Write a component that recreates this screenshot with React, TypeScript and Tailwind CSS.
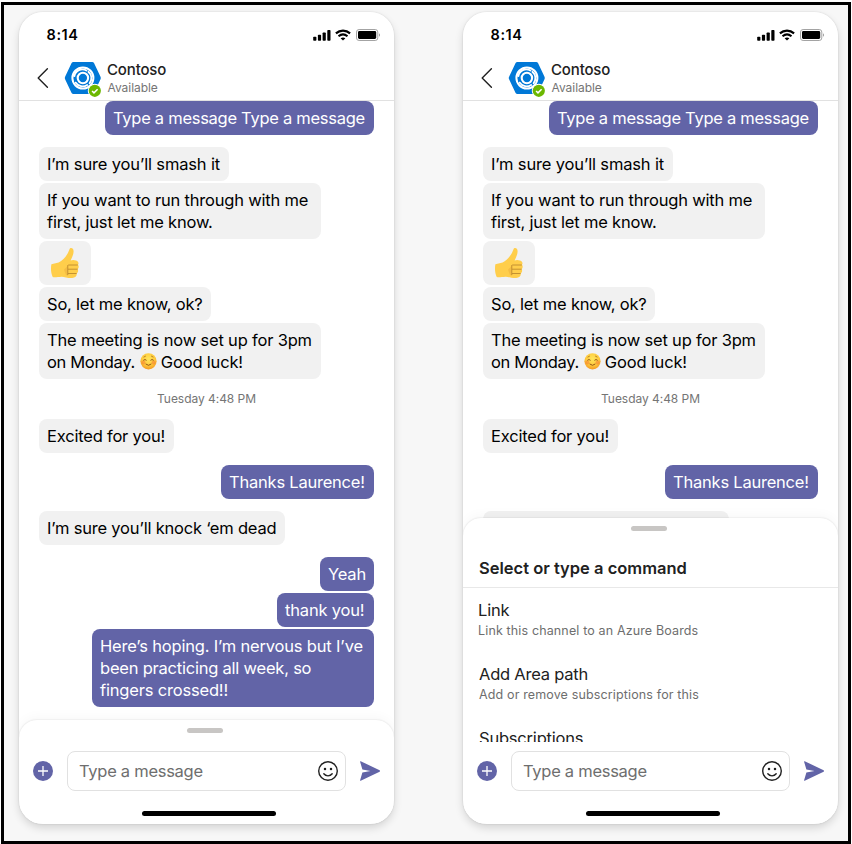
import type { ReactNode } from "react";

function StatusBar() {
  return (
    <div className="flex h-[46px] shrink-0 items-center pr-[13px] pb-px pl-[27.5px]">
      <span className="text-[14.5px] font-semibold tracking-[0.6px] text-black">8:14</span>
      <div className="ml-auto flex items-center">
        <svg width="18" height="12" viewBox="0 0 18 12" fill="#000">
          <rect x="0.2" y="7.8" width="3.2" height="4" rx="0.8" />
          <rect x="4.9" y="5.8" width="3.2" height="6" rx="0.8" />
          <rect x="9.6" y="3.5" width="3.2" height="8.3" rx="0.8" />
          <rect x="14.3" y="1" width="3.2" height="10.8" rx="0.8" />
        </svg>
        <svg className="ml-1" width="16" height="12" viewBox="0 0 16 12" fill="none" stroke="#000" strokeWidth="2.1">
          <path d="M0.9 4.4C5 0.7 11 0.7 15.1 4.4" />
          <path d="M3.5 7.3C6.2 5 9.8 5 12.5 7.3" />
          <path d="M8 11.6L5.6 9.3C7.1 8.1 8.9 8.1 10.4 9.3Z" fill="#000" stroke="none" />
        </svg>
        <svg className="ml-[5px]" width="25" height="12" viewBox="0 0 25 12">
          <rect x="0.5" y="0.5" width="21.3" height="11" rx="2.6" fill="#fff" stroke="#a3a3a3" />
          <rect x="2" y="2" width="18.2" height="8" rx="1.4" fill="#000" />
          <path d="M23 4.2C24.3 4.8 24.3 7.2 23 7.8Z" fill="#999" />
        </svg>
      </div>
    </div>
  );
}

function Header() {
  return (
    <div className="flex h-[43px] shrink-0 border-b border-[#e1e1e1] pl-[17px]">
      <svg className="mt-[9px]" width="14" height="22" viewBox="0 0 14 22" fill="none" stroke="#212121" strokeWidth="1.4" strokeLinecap="round" strokeLinejoin="round">
        <path d="M11.4 1.8L2.2 11L11.4 20.2" />
      </svg>
      <svg className="ml-[14px]" width="40" height="42" viewBox="0 0 40 42">
        <path d="M9.4 4H28.2Q29.4 4 30 5L36.4 18.6Q37.3 20 36.4 21.4L30 35Q29.4 36 28.2 36H9.4Q8.2 36 7.6 35L1.2 21.4Q0.3 20 1.2 18.6L7.6 5Q8.2 4 9.4 4Z" fill="#0078d7" />
        <g fill="none" stroke="#fff" strokeLinecap="round">
          <circle cx="18.9" cy="20" r="10.5" strokeWidth="2" />
          <circle cx="18.9" cy="20" r="5.2" strokeWidth="2.1" />
          <path d="M10.4 18.2A8 8 0 0 1 22.5 12.6" strokeWidth="1.8" />
          <path d="M24.4 13.8A8.2 8.2 0 0 1 25.6 25.2" strokeWidth="1.8" />
          <path d="M23.2 26.9A8.2 8.2 0 0 1 11.6 24.6" strokeWidth="1.8" />
        </g>
        <circle cx="30.8" cy="32.8" r="7" fill="#fff" />
        <circle cx="30.8" cy="32.8" r="6.1" fill="#6bb700" />
        <path d="M28.1 33L30 34.9L33.6 31.3" fill="none" stroke="#fff" strokeWidth="1.5" />
      </svg>
      <div className="ml-[3px] flex flex-col">
        <span className="mt-[3px] text-[15px] leading-[18px] font-medium tracking-[-0.15px] text-[#212121]">Contoso</span>
        <span className="mt-[2px] pl-[0.5px] text-[12px] leading-[14px] tracking-[-0.04px] text-[#757575]">Available</span>
      </div>
    </div>
  );
}

function Bubble({ mine, className, children }: { mine?: boolean; className: string; children: ReactNode }) {
  const tone = mine ? "self-end bg-[#6264a7] text-white" : "self-start bg-[#f1f1f1] text-black";
  return (
    <div className={`shrink-0 rounded-lg px-2 py-1.5 text-[16.5px] leading-[22px] whitespace-nowrap ${tone} ${className}`}>
      {children}
    </div>
  );
}

function ThumbsUp() {
  return (
    <svg width="30" height="32" viewBox="0 0 30 32">
      <path d="M1.4 17.2L8.6 15.6C13.4 13 17.4 8.4 19.4 2.4C20.2 0.2 23.6 0.8 23.6 4.4C23.6 7.6 22 10.4 20.6 13.4Q23 12.4 26 13.4C28.6 14.2 29 16.6 28 17.8C29.1 19 28.8 21.2 27.7 22.2C28.6 23.8 28 25.6 26.8 26.4C27 29.4 25.2 30.9 22.3 31C18 31.3 14 29.6 11.6 29.7C8 29.9 5.2 30.6 2.7 30.1C0.9 26 0.6 21 1.4 17.2Z" fill="#ffce4b" />
      <path d="M14 22.8L18 18.5V29L16 28Z" fill="#edb23f" opacity="0.6" />
      <path d="M18.2 18H27.8M18 22.2H27.6M18 26.5H26.6M17.8 18V28" fill="none" stroke="#bd8b2f" strokeWidth="0.9" />
    </svg>
  );
}

function SmilingFace() {
  return (
    <svg className="mr-1 ml-[5px] inline-block align-[-2px]" width="17" height="17" viewBox="0 0 17 17">
      <defs>
        <radialGradient id="face" cx="50%" cy="35%" r="65%">
          <stop offset="0" stopColor="#ffe65c" />
          <stop offset="0.6" stopColor="#ffcb3d" />
          <stop offset="1" stopColor="#f39a22" />
        </radialGradient>
      </defs>
      <circle cx="8.5" cy="8.3" r="8.1" fill="url(#face)" />
      <circle cx="3.4" cy="9.5" r="2.1" fill="#f56f32" opacity="0.45" />
      <circle cx="13.6" cy="9.5" r="2.1" fill="#f56f32" opacity="0.45" />
      <g fill="none" stroke="#8a4b12" strokeWidth="0.9" strokeLinecap="round">
        <path d="M3.6 7.1Q5 5.6 6.3 7.1M10.7 7.1Q12 5.6 13.4 7.1" />
        <path d="M5.9 11.2Q8.5 13.6 11.1 11.2" />
        <path d="M3.9 4L5.5 3.2M11.5 3.2L13.1 4" strokeWidth="0.6" />
      </g>
    </svg>
  );
}

function Chat({ replies }: { replies?: ReactNode }) {
  return (
    <div className="flex min-h-0 flex-1 flex-col gap-0.5 overflow-hidden px-5">
      <Bubble mine className="w-[269px] tracking-[-0.28px]">Type a message Type a message</Bubble>
      <Bubble className="mt-2.5 w-[190px] tracking-[-0.16px]">I’m sure you’ll smash it</Bubble>
      <Bubble className="w-[282px] tracking-[-0.19px]">
        If you want to run through with me
        <br />
        first, just let me know.
      </Bubble>
      <div className="flex h-11 w-[52px] shrink-0 items-center justify-center rounded-lg bg-[#f1f1f1] pr-px">
        <ThumbsUp />
      </div>
      <Bubble className="w-[172px] tracking-[-0.21px]">So, let me know, ok?</Bubble>
      <Bubble className="w-[282px] tracking-[-0.19px]">
        The meeting is now set up for 3pm
        <br />
        <span className="tracking-[-0.34px]">on Monday.</span>
        <SmilingFace />
        <span className="tracking-[-0.18px]">Good luck!</span>
      </Bubble>
      <div className="flex h-9 shrink-0 items-center justify-center pb-px text-[12px] tracking-[-0.04px] text-[#757575]">
        Tuesday 4:48 PM
      </div>
      <Bubble className="w-[135px] tracking-[-0.2px]">Excited for you!</Bubble>
      <Bubble mine className="mt-2.5 w-[153px] tracking-[-0.22px]">Thanks Laurence!</Bubble>
      <Bubble className="mt-2.5 w-[246px] tracking-[-0.2px]">I’m sure you’ll knock ‘em dead</Bubble>
      {replies}
    </div>
  );
}

function Replies() {
  return (
    <>
      <Bubble mine className="mt-2.5 w-[54px] tracking-[-0.2px]">Yeah</Bubble>
      <Bubble mine className="w-[97px] tracking-[-0.18px]">thank you!</Bubble>
      <Bubble mine className="w-[282px] tracking-[-0.18px]">
        Here’s hoping. I’m nervous but I’ve
        <br />
        <span className="tracking-[-0.22px]">been practicing all week, so</span>
        <br />
        fingers crossed!!
      </Bubble>
    </>
  );
}

function Composer() {
  return (
    <div className="flex h-[82px] shrink-0 flex-col">
      <div className="mt-[9px] flex h-10 items-center pl-[14px]">
        <svg width="20" height="20" viewBox="0 0 20 20">
          <circle cx="10" cy="10" r="10" fill="#6264a7" />
          <path d="M10 5V15M5 10H15" stroke="#fff" strokeWidth="1.3" />
        </svg>
        <div className="ml-[14px] flex h-10 w-[279px] items-center rounded-lg border border-[#e1e1e1] pr-[7px] pl-[11px]">
          <span className="text-[16.5px] tracking-[-0.28px] text-[#6e6e6e]">Type a message</span>
          <svg className="ml-auto" width="20" height="20" viewBox="0 0 20 20" fill="none" stroke="#212121" strokeWidth="1.4">
            <circle cx="10" cy="10" r="9.3" />
            <circle cx="7" cy="8" r="1.25" fill="#212121" stroke="none" />
            <circle cx="13" cy="8" r="1.25" fill="#212121" stroke="none" />
            <path d="M5.8 12.8C8 15.6 12 15.6 14.2 12.8" strokeLinecap="round" />
          </svg>
        </div>
        <svg className="ml-[14px]" width="20" height="20" viewBox="0 0 20 20" fill="#6264a7">
          <path d="M0.7 0.2L19.6 9.3Q20.6 10 19.6 10.7L0.7 19.8Q0 20 0.1 19.2L2.4 11.4L10.5 10L2.4 8.6L0.1 0.8Q0 0 0.7 0.2Z" />
        </svg>
      </div>
      <div className="mt-5 ml-[123px] h-[5px] w-[134px] rounded-full bg-black" />
    </div>
  );
}

function Command({ title, detail, className }: { title: string; detail?: string; className: string }) {
  return (
    <div className={`h-16 shrink-0 ${className}`}>
      <div className="text-[16.5px] leading-[22px] text-[#212121]">{title}</div>
      {detail && <div className="mt-px text-[12.5px] leading-[18px] tracking-[0.14px] text-[#6e6e6e]">{detail}</div>}
    </div>
  );
}

function Sheet({ children }: { children?: ReactNode }) {
  return (
    <div className="z-10 flex shrink-0 flex-col rounded-t-[18px] bg-white shadow-[0_0_2px_rgba(0,0,0,0.14),0_-3px_12px_rgba(0,0,0,0.03)]">
      <div className="mt-2 ml-[168px] h-[5px] w-9 shrink-0 rounded-full bg-[#c8c6c4]" />
      {children}
    </div>
  );
}

function Phone({ replies, children }: { replies?: ReactNode; children: ReactNode }) {
  return (
    <div className="h-[812px] w-[375px] rounded-[24px] shadow-[0_0_2px_rgba(0,0,0,0.14),0_4px_9px_rgba(0,0,0,0.14)]">
      <div className="flex h-full flex-col overflow-hidden rounded-[24px] bg-white">
        <StatusBar />
        <Header />
        <Chat replies={replies} />
        {children}
      </div>
    </div>
  );
}

export default function App() {
  return (
    <div className="h-[844px] w-[852px] overflow-hidden bg-white pt-[2px] pl-px font-['Inter','Liberation_Sans',sans-serif]">
      <div className="flex h-[842px] w-[850px] gap-[69px] border-[3px] border-black bg-[#f7f7f7] pt-[7px] pl-[15px]">
        <Phone replies={<Replies />}>
          <Sheet>
            <div className="h-[9px]" />
            <Composer />
          </Sheet>
        </Phone>
        <Phone>
          <Sheet>
            <div className="flex h-[211px] flex-col overflow-hidden">
              <div className="flex h-[57px] shrink-0 items-end border-b border-[#e8e8e8] pb-2 pl-4 text-[16.5px] leading-[22px] font-semibold text-[#212121]">
                Select or type a command
              </div>
              <Command className="mt-[11px] pl-[15px] tracking-[-0.2px]" title="Link" detail="Link this channel to an Azure Boards" />
              <Command className="pl-4 tracking-[-0.23px]" title="Add Area path" detail="Add or remove subscriptions for this" />
              <Command className="pl-4 tracking-[-0.2px]" title="Subscriptions" />
            </div>
            <Composer />
          </Sheet>
        </Phone>
      </div>
    </div>
  );
}
